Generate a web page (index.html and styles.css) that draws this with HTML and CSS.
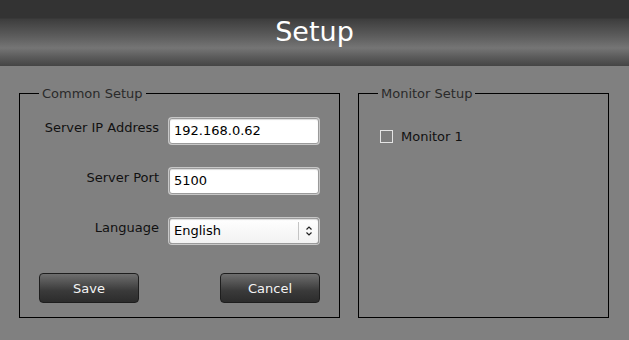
FILE: index.html
```html
<!DOCTYPE html>
<html lang="en">
<head>
    <meta charset="UTF-8">
    <meta name="viewport" content="width=device-width, initial-scale=1.0">
    <title>Setup</title>
    <link rel="stylesheet" href="styles.css">
</head>
<body>
    <div class="header">Setup</div>
    <div class="main">
        <fieldset class="group common">
            <legend>Common Setup</legend>
            <div class="form">
                <label class="label">Server IP Address</label>
                <div class="input">192.168.0.62</div>
                <label class="label">Server Port</label>
                <div class="input">5100</div>
                <label class="label">Language</label>
                <div class="input select">
                    <span class="value">English</span>
                    <span class="arrow">
                        <svg width="8" height="12" viewBox="0 0 8 12">
                            <path d="M1.5 4.5 L4 2 L6.5 4.5 M1.5 7.5 L4 10 L6.5 7.5" fill="none" stroke="#222" stroke-width="1.2"/>
                        </svg>
                    </span>
                </div>
            </div>
            <div class="buttons">
                <button class="btn">Save</button>
                <button class="btn">Cancel</button>
            </div>
        </fieldset>
        <fieldset class="group monitor">
            <legend>Monitor Setup</legend>
            <div class="check">
                <span class="box"></span>
                <span>Monitor 1</span>
            </div>
        </fieldset>
    </div>
</body>
</html>
```

FILE: styles.css
```css
body {
    margin: 0;
    padding: 0;
    width: 629px;
    height: 340px;
    background: #808080;
    font-family: "DejaVu Sans", sans-serif;
    font-size: 13px;
    color: #111;
    overflow: hidden;
}
.header {
    height: 66px;
    line-height: 64px;
    text-align: center;
    color: #fff;
    font-size: 27px;
    background: linear-gradient(to bottom, #333 0, #333 18px, #3d3d3d 19px, #5c5c5c 36px, #757575 48px, #5e5e5e 56px, #454545 66px);
}
.main {
    display: flex;
    gap: 18px;
    padding: 20px 20px 0 19px;
}
.group {
    margin: 0;
    border: 1px solid #000;
    padding: 0;
    height: 232px;
    box-sizing: border-box;
}
.group legend {
    color: #2a2a2a;
    padding: 0 3px;
    margin-left: 19px;
}
.common {
    width: 321px;
    padding: 17px 19px 13px 0;
}
.monitor {
    flex: 1;
    padding: 28px 0 0 0;
}
.form {
    display: grid;
    grid-template-columns: 139px 150px;
    column-gap: 10px;
    row-gap: 24px;
    align-items: center;
}
.label {
    text-align: right;
    margin-top: -7px;
}
.input {
    height: 26px;
    box-sizing: border-box;
    background: #fff;
    border: 1px solid #9a9a9a;
    border-radius: 3px;
    box-shadow: 0 0 0 1px #c8c8c8, inset 0 1px 1px rgba(0,0,0,0.15);
    padding: 0 4px;
    line-height: 24px;
    color: #000;
}
.select {
    display: flex;
    padding-right: 0;
    background: linear-gradient(to bottom, #fff, #f2f2f2);
}
.select .value {
    flex: 1;
}
.select .arrow {
    width: 19px;
    border-left: 1px solid #c4c4c4;
    margin: 3px 0;
    display: flex;
    align-items: center;
    justify-content: center;
}
.buttons {
    display: flex;
    justify-content: space-between;
    margin: 29px 0 0 19px;
}
.btn {
    width: 100px;
    height: 30px;
    border: 1px solid #1e1e1e;
    border-radius: 4px;
    background: linear-gradient(to bottom, #6e6e6e, #3a3a3a 60%, #2c2c2c);
    color: #f4f4f4;
    font-family: "DejaVu Sans", sans-serif;
    font-size: 13px;
    padding: 0;
}
.check {
    display: flex;
    align-items: center;
    gap: 8px;
    margin-left: 21px;
    color: #111;
}
.box {
    width: 11px;
    height: 11px;
    border: 1px solid #e4e4e4;
    background: #7c7c7c;
}
```
